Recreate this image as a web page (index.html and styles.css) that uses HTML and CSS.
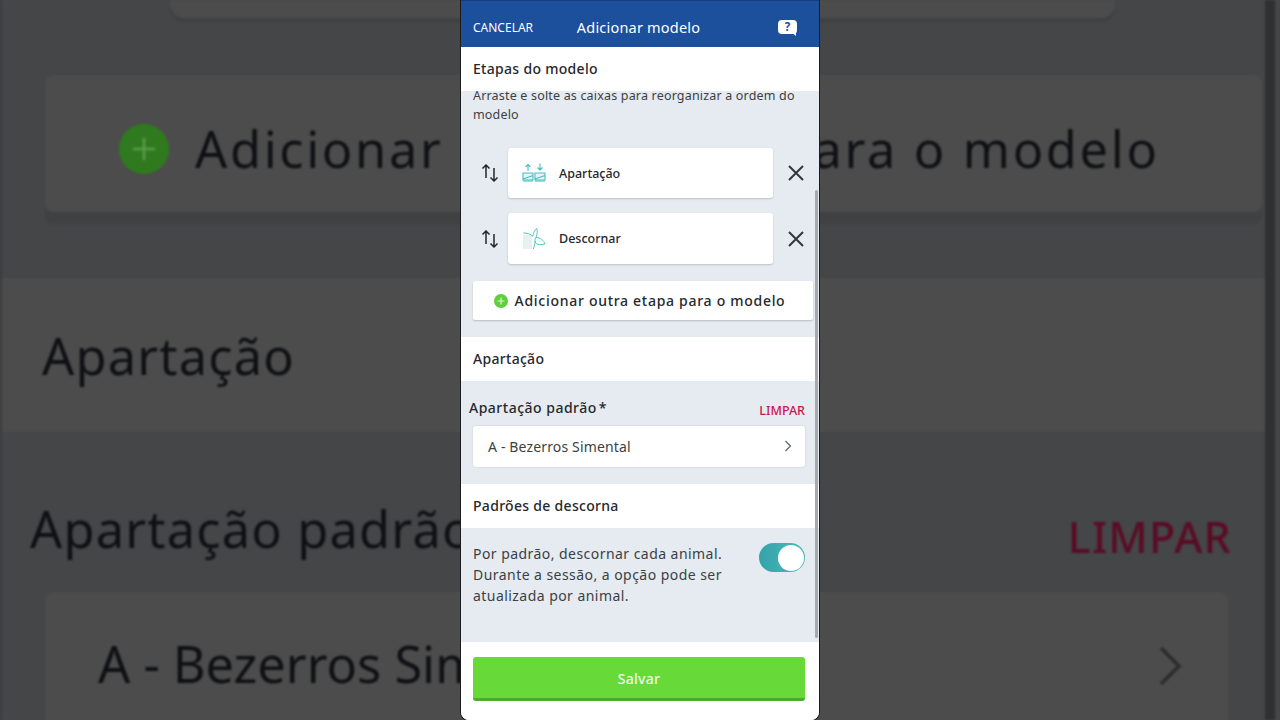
FILE: index.html
```html
<!DOCTYPE html>
<html lang="pt-BR">
<head>
    <meta charset="UTF-8">
    <meta name="viewport" content="width=device-width, initial-scale=1.0">
    <title>Adicionar modelo</title>
    <link rel="stylesheet" href="styles.css">
</head>
<body>

<!-- Blurred, enlarged copy of the screen behind the phone -->
<div class="backdrop" aria-hidden="true">
    <div class="backdrop-screen">
        <div class="bd-top-card"></div>
        <div class="bd-add">
            <svg viewBox="0 0 50 50" width="50" height="50"><circle cx="25" cy="25" r="25" fill="#2f7a1e"/><path d="M25 14v22M14 25h22" stroke="#5d9a4e" stroke-width="2.5"/></svg>
            <span>Adicionar outra etapa para o modelo</span>
        </div>
        <div class="bd-section">Apartação</div>
        <div class="bd-label-row">
            <span>Apartação padrão*</span>
            <span class="bd-clear">LIMPAR</span>
        </div>
        <div class="bd-field">
            <span>A - Bezerros Simental</span>
            <svg viewBox="0 0 24 40" width="24" height="40"><path d="M3 2l18 18L3 38" fill="none" stroke="#2b2c2e" stroke-width="3.5"/></svg>
        </div>
    </div>
</div>

<div class="phone">
    <header class="top-bar">
        <span class="cancel">CANCELAR</span>
        <h1>Adicionar modelo</h1>
        <span class="help">?</span>
    </header>

    <div class="section-head first">Etapas do modelo</div>

    <main class="scroll-area">
        <p class="hint">Arraste e solte as caixas para reorganizar a ordem do modelo</p>

        <div class="step-row">
            <svg class="sort" viewBox="0 0 18 18" width="18" height="18"><path d="M5 14V1M1.500 4.500L5 1l3.500 3.500M13 4v13M9.500 13.500L13 17l3.500-3.500" fill="none" stroke="#24272b" stroke-width="1.500"/></svg>
            <div class="step-card">
                <svg class="step-icon" viewBox="0 0 24 20" width="24" height="20">
                    <path d="M1 10h10v7H1zM13 10h10v7H13z" fill="#e3f6f6"/>
                    <path d="M1 17h10v2H1zM13 17h10v2H13z" fill="#9adfe0"/>
                    <g fill="none" stroke="#4dbcc1" stroke-width="1.100">
                        <path d="M6 8V1.500M3.500 4L6 1.500 8.500 4M18 .5V7M15.500 4.500L18 7l2.500-2.500"/>
                        <path d="M1 10h10v7H1zM13 10h10v7H13zM1 16l10-3.500M13 16l10-3.500"/>
                    </g>
                </svg>
                <span>Apartação</span>
            </div>
            <svg class="remove" viewBox="0 0 18 18" width="18" height="18"><path d="M2 2l14 14M16 2L2 16" stroke="#33363a" stroke-width="2"/></svg>
        </div>

        <div class="step-row">
            <svg class="sort" viewBox="0 0 18 18" width="18" height="18"><path d="M5 14V1M1.500 4.500L5 1l3.500 3.500M13 4v13M9.500 13.500L13 17l3.500-3.500" fill="none" stroke="#24272b" stroke-width="1.500"/></svg>
            <div class="step-card">
                <svg class="step-icon" viewBox="0 0 24 23" width="24" height="23">
                    <rect x="1" y="8" width="9" height="14" fill="#e6f1f2"/>
                    <path d="M1.300 6C5 6 9 7 10.700 9.300 11 6 13 3 14.700 1.300c.8 2.700.8 5.700-.7 9-1 .7-1 2.700-1 3.700 0 3 4 4.500 10 3-1-3.500-5-6.500-9-6.700M13 14c0 3-1 6-1.700 8" fill="none" stroke="#56c2c6" stroke-width="1"/>
                </svg>
                <span>Descornar</span>
            </div>
            <svg class="remove" viewBox="0 0 18 18" width="18" height="18"><path d="M2 2l14 14M16 2L2 16" stroke="#33363a" stroke-width="2"/></svg>
        </div>

        <div class="add-step">
            <svg viewBox="0 0 14 14" width="14" height="14"><circle cx="7" cy="7" r="7" fill="#5fcf3c"/><path d="M7 3.500v7M3.500 7h7" stroke="#d8f5cf" stroke-width="1.200"/></svg>
            <span>Adicionar outra etapa para o modelo</span>
        </div>

        <div class="section-head">Apartação</div>

        <div class="label-row">
            <span class="field-label">Apartação padrão<b>*</b></span>
            <span class="clear">LIMPAR</span>
        </div>
        <div class="select-field">
            <span>A - Bezerros Simental</span>
            <svg viewBox="0 0 8 12" width="8" height="12"><path d="M1.500 1l5 5-5 5" fill="none" stroke="#5b6168" stroke-width="1.200"/></svg>
        </div>

        <div class="section-head">Padrões de descorna</div>

        <div class="toggle-row">
            <p>Por padrão, descornar cada animal. Durante a sessão, a opção pode ser atualizada por animal.</p>
            <div class="toggle"><span class="knob"></span></div>
        </div>
    </main>

    <footer class="bottom-bar">
        <button class="save">Salvar</button>
    </footer>

    <div class="scrollbar"></div>
</div>

</body>
</html>
```

FILE: styles.css
```css
/* General styles */
* {
    box-sizing: border-box;
}

html,
body {
    height: 100%;
}

body {
    margin: 0;
    overflow: hidden;
    position: relative;
    background-color: #454648;
    font-family: "Noto Sans", "Open Sans", sans-serif;
    display: flex;
    justify-content: center;
}

/* Backdrop */
.backdrop {
    position: absolute;
    inset: 0;
    overflow: hidden;
    background-color: #454648;
}

.backdrop-screen {
    width: 1275px;
    height: 720px;
    border-left: 2px solid #3a3b3d;
    border-right: 10px solid #2f3031;
    color: #0f1013;
    filter: blur(1.2px);
}

.bd-top-card {
    height: 18px;
    margin: 0 150px 0 168px;
    background-color: #4c4c4c;
    border-radius: 0 0 14px 14px;
    box-shadow: 0 4px 0 #404143;
}

.bd-add {
    height: 137px;
    margin: 57px 3px 0 43px;
    padding: 10px 0 0 74px;
    display: flex;
    align-items: center;
    gap: 26px;
    font-size: 50.500px;
    letter-spacing: 2.650px;
    background-color: #4c4c4c;
    box-shadow: 0 12px 0 #404143;
    border-radius: 8px;
}

.bd-section {
    height: 154px;
    margin-top: 66px;
    padding-left: 40px;
    display: flex;
    align-items: center;
    font-size: 50.500px;
    letter-spacing: 1.200px;
    background-color: #4c4c4c;
}

.bd-label-row {
    height: 160px;
    padding: 67px 33px 0 28px;
    display: flex;
    justify-content: space-between;
    font-size: 50.500px;
    letter-spacing: 1.200px;
    line-height: 60px;
}

.bd-clear {
    color: #5a0c24;
    font-size: 43px;
    font-weight: 500;
    padding-top: 8px;
}

.bd-field {
    height: 170px;
    margin: 0 37px 0 43px;
    padding: 42px 46px 0 53px;
    display: flex;
    justify-content: space-between;
    align-items: flex-start;
    font-size: 50.500px;
    line-height: 60px;
    background-color: #4c4c4c;
    border-radius: 8px;
}

.bd-field svg {
    margin-top: 12px;
}

/* Phone screen */
.phone {
    position: relative;
    width: 358px;
    height: 720px;
    display: flex;
    flex-direction: column;
    background-color: #e6ebf1;
    border-radius: 0 0 8px 8px;
    box-shadow: 0 0 0 1px #1c1c1c;
    overflow: hidden;
    color: #25282c;
}

/* Top bar */
.top-bar {
    height: 47px;
    flex-shrink: 0;
    padding: 7px 22px 0 12px;
    display: flex;
    align-items: center;
    justify-content: space-between;
    background-color: #1c4f9c;
    border-top: 1px solid #173f7c;
    color: #fff;
}

.cancel {
    font-size: 12px;
}

.top-bar h1 {
    margin: 0 34px 2px 0;
    font-size: 14.500px;
    font-weight: 400;
    letter-spacing: 0.200px;
}

.help {
    position: relative;
    width: 19px;
    height: 14px;
    margin-bottom: 1px;
    background-color: #fff;
    border-radius: 4px;
    color: #1c4f9c;
    font-size: 11.500px;
    font-weight: 700;
    line-height: 14px;
    text-align: center;
}

/* bubble tail */
.help::after {
    content: "";
    position: absolute;
    right: 1px;
    bottom: -2px;
    width: 5px;
    height: 4px;
    background-color: #fff;
    clip-path: polygon(0 0, 100% 0, 100% 100%);
}

/* Section heads */
.section-head {
    height: 44px;
    padding: 0 12px 1px;
    display: flex;
    align-items: center;
    background-color: #fff;
    font-size: 14px;
    font-weight: 500;
    letter-spacing: 0.300px;
    flex-shrink: 0;
}

.section-head.first {
    padding-bottom: 2px;
}

/* Scrolling content */
.scroll-area {
    flex: 1;
    overflow: hidden;
}

.hint {
    margin: -5px 0 0;
    padding: 0 12px;
    font-size: 12.500px;
    line-height: 19px;
    letter-spacing: 0.180px;
    color: #3b3f44;
}

.step-row {
    height: 51px;
    margin-top: 15px;
    padding-left: 20px;
    display: flex;
    align-items: center;
}

.hint + .step-row {
    height: 50px;
    margin-top: 24px;
}

.step-card {
    width: 265px;
    height: 100%;
    margin-left: 9px;
    padding-left: 14px;
    display: flex;
    align-items: center;
    background-color: #fff;
    border-radius: 3px;
    box-shadow: 0 1px 2px rgba(0, 0, 0, 0.18);
    font-size: 12.500px;
    font-weight: 500;
}

.step-icon {
    flex-shrink: 0;
    margin-right: 13px;
}

.remove {
    margin-left: 14px;
}

.add-step {
    height: 39px;
    margin: 17px 6px 0 12px;
    padding-right: 7px;
    display: flex;
    align-items: center;
    justify-content: center;
    gap: 7px;
    background-color: #fff;
    border-radius: 2px;
    box-shadow: 0 1px 2px rgba(0, 0, 0, 0.2);
    font-size: 14px;
    font-weight: 500;
    letter-spacing: 0.710px;
}

.add-step + .section-head {
    margin-top: 17px;
}

.label-row {
    height: 45px;
    padding: 17px 14px 0 8px;
    display: flex;
    justify-content: space-between;
    line-height: 20px;
}

.field-label {
    font-size: 14px;
    font-weight: 500;
    letter-spacing: 0.500px;
}

.field-label b {
    margin-left: 2px;
    font-weight: 500;
}

.clear {
    padding-top: 3px;
    font-size: 12.500px;
    font-weight: 500;
    color: #cc1648;
}

.select-field {
    height: 41px;
    margin: 0 14px 17px 12px;
    padding: 0 13px 1px 15px;
    display: flex;
    align-items: center;
    justify-content: space-between;
    background-color: #fff;
    border-radius: 3px;
    box-shadow: 0 0 2px rgba(0, 0, 0, 0.15);
    font-size: 14px;
    letter-spacing: 0.150px;
    color: #3b3f44;
}

.toggle-row {
    padding: 15px 14px 0 12px;
    display: flex;
    justify-content: space-between;
    align-items: flex-start;
}

.toggle-row p {
    width: 265px;
    margin: 0;
    font-size: 14px;
    line-height: 21px;
    letter-spacing: 0.450px;
    color: #3b3f44;
}

/* Toggle */
.toggle {
    width: 46px;
    height: 29px;
    padding: 1.500px;
    display: flex;
    justify-content: flex-end;
    background: linear-gradient(90deg, #36a3ab, #47bcb9);
    border-radius: 15px;
}

.knob {
    width: 26px;
    height: 26px;
    background-color: #fff;
    border-radius: 50%;
}

/* Footer */
.bottom-bar {
    height: 78px;
    flex-shrink: 0;
    padding: 15px 14px 0 12px;
    background-color: #fff;
}

.save {
    width: 100%;
    height: 44px;
    padding-top: 3px;
    border: none;
    border-bottom: 3px solid #4fa82f;
    border-radius: 3px;
    background-color: #67da3a;
    color: #f2fbee;
    font-family: inherit;
    font-size: 14px;
    font-weight: 500;
    letter-spacing: 0.300px;
}

.scrollbar {
    position: absolute;
    top: 190px;
    right: 1px;
    width: 3px;
    height: 448px;
    background-color: #a6a9ad;
    border-radius: 2px;
}
```
